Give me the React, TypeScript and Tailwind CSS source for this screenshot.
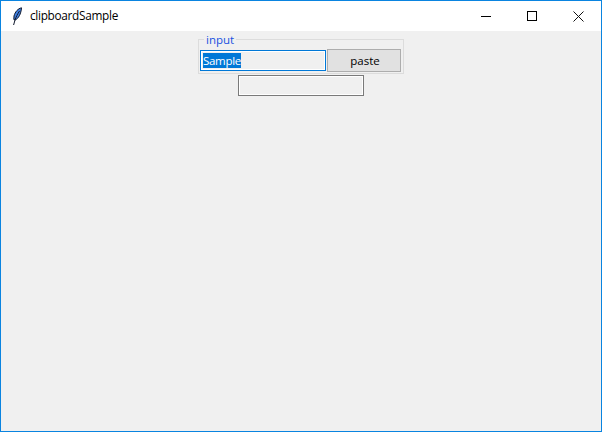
export default function App() {
  return (
    <div className="w-[602px] h-[432px] flex flex-col border border-[#0a84e0] bg-[#f0f0f0] font-['Open_Sans',sans-serif] text-[11.5px] text-black overflow-hidden">
      <div className="h-[30px] bg-white flex items-center shrink-0">
        <svg className="ml-[11px] w-[11px] h-[19px]" viewBox="0 0 11 19">
          <path d="M9.5 0.8 C6 1.5 3 5 2 9 L1.8 12.5 L3.2 13 C6.5 11.5 9 7 9.5 0.8 Z" fill="#3f7fe0" stroke="#10182c" strokeWidth="1" />
          <path d="M7.5 4 C5.5 7 4 10 3 13 L1.6 18" stroke="#10182c" strokeWidth="1" fill="none" />
        </svg>
        <span className="ml-[7px] text-[11.8px] leading-none tracking-[-0.3px]">clipboardSample</span>
        <div className="ml-auto flex items-center">
          <button className="w-[46px] h-[30px] flex items-center justify-center">
            <span className="block w-[10px] h-px bg-black" />
          </button>
          <button className="w-[46px] h-[30px] flex items-center justify-center">
            <span className="block w-[10px] h-[10px] border border-black" />
          </button>
          <button className="w-[46px] h-[30px] flex items-center justify-center">
            <svg width="11" height="11" viewBox="0 0 11 11">
              <path d="M0.5 0.5 L10.5 10.5 M10.5 0.5 L0.5 10.5" stroke="#111" strokeWidth="1" />
            </svg>
          </button>
        </div>
      </div>
      <div className="flex flex-col pt-[8px]">
        <div className="relative w-[206px] h-[35px] ml-[197px] border border-[#dcdcdc] flex items-start pl-px pt-[9px] gap-px">
          <span className="absolute left-[5px] top-[-7px] bg-[#f0f0f0] px-[2px] leading-[14px] text-[#1a50e0]">input</span>
          <div className="w-[126px] h-[21px] mt-px border border-[#0078d7] ring-1 ring-inset ring-white bg-[#f0f0f0] pl-[2px] flex items-center">
            <span className="bg-[#0078d7] text-white h-[15px] leading-[15px] tracking-[-0.3px]">Sample</span>
          </div>
          <button className="w-[74px] h-[23px] border border-[#adadad] bg-[#e1e1e1] pt-[1px] pl-[2px]">paste</button>
        </div>
        <div className="w-[126px] h-[21px] ml-[237px] mt-[1px] border border-[#7a7a7a] ring-1 ring-inset ring-white bg-[#f0f0f0]" />
      </div>
    </div>
  );
}
